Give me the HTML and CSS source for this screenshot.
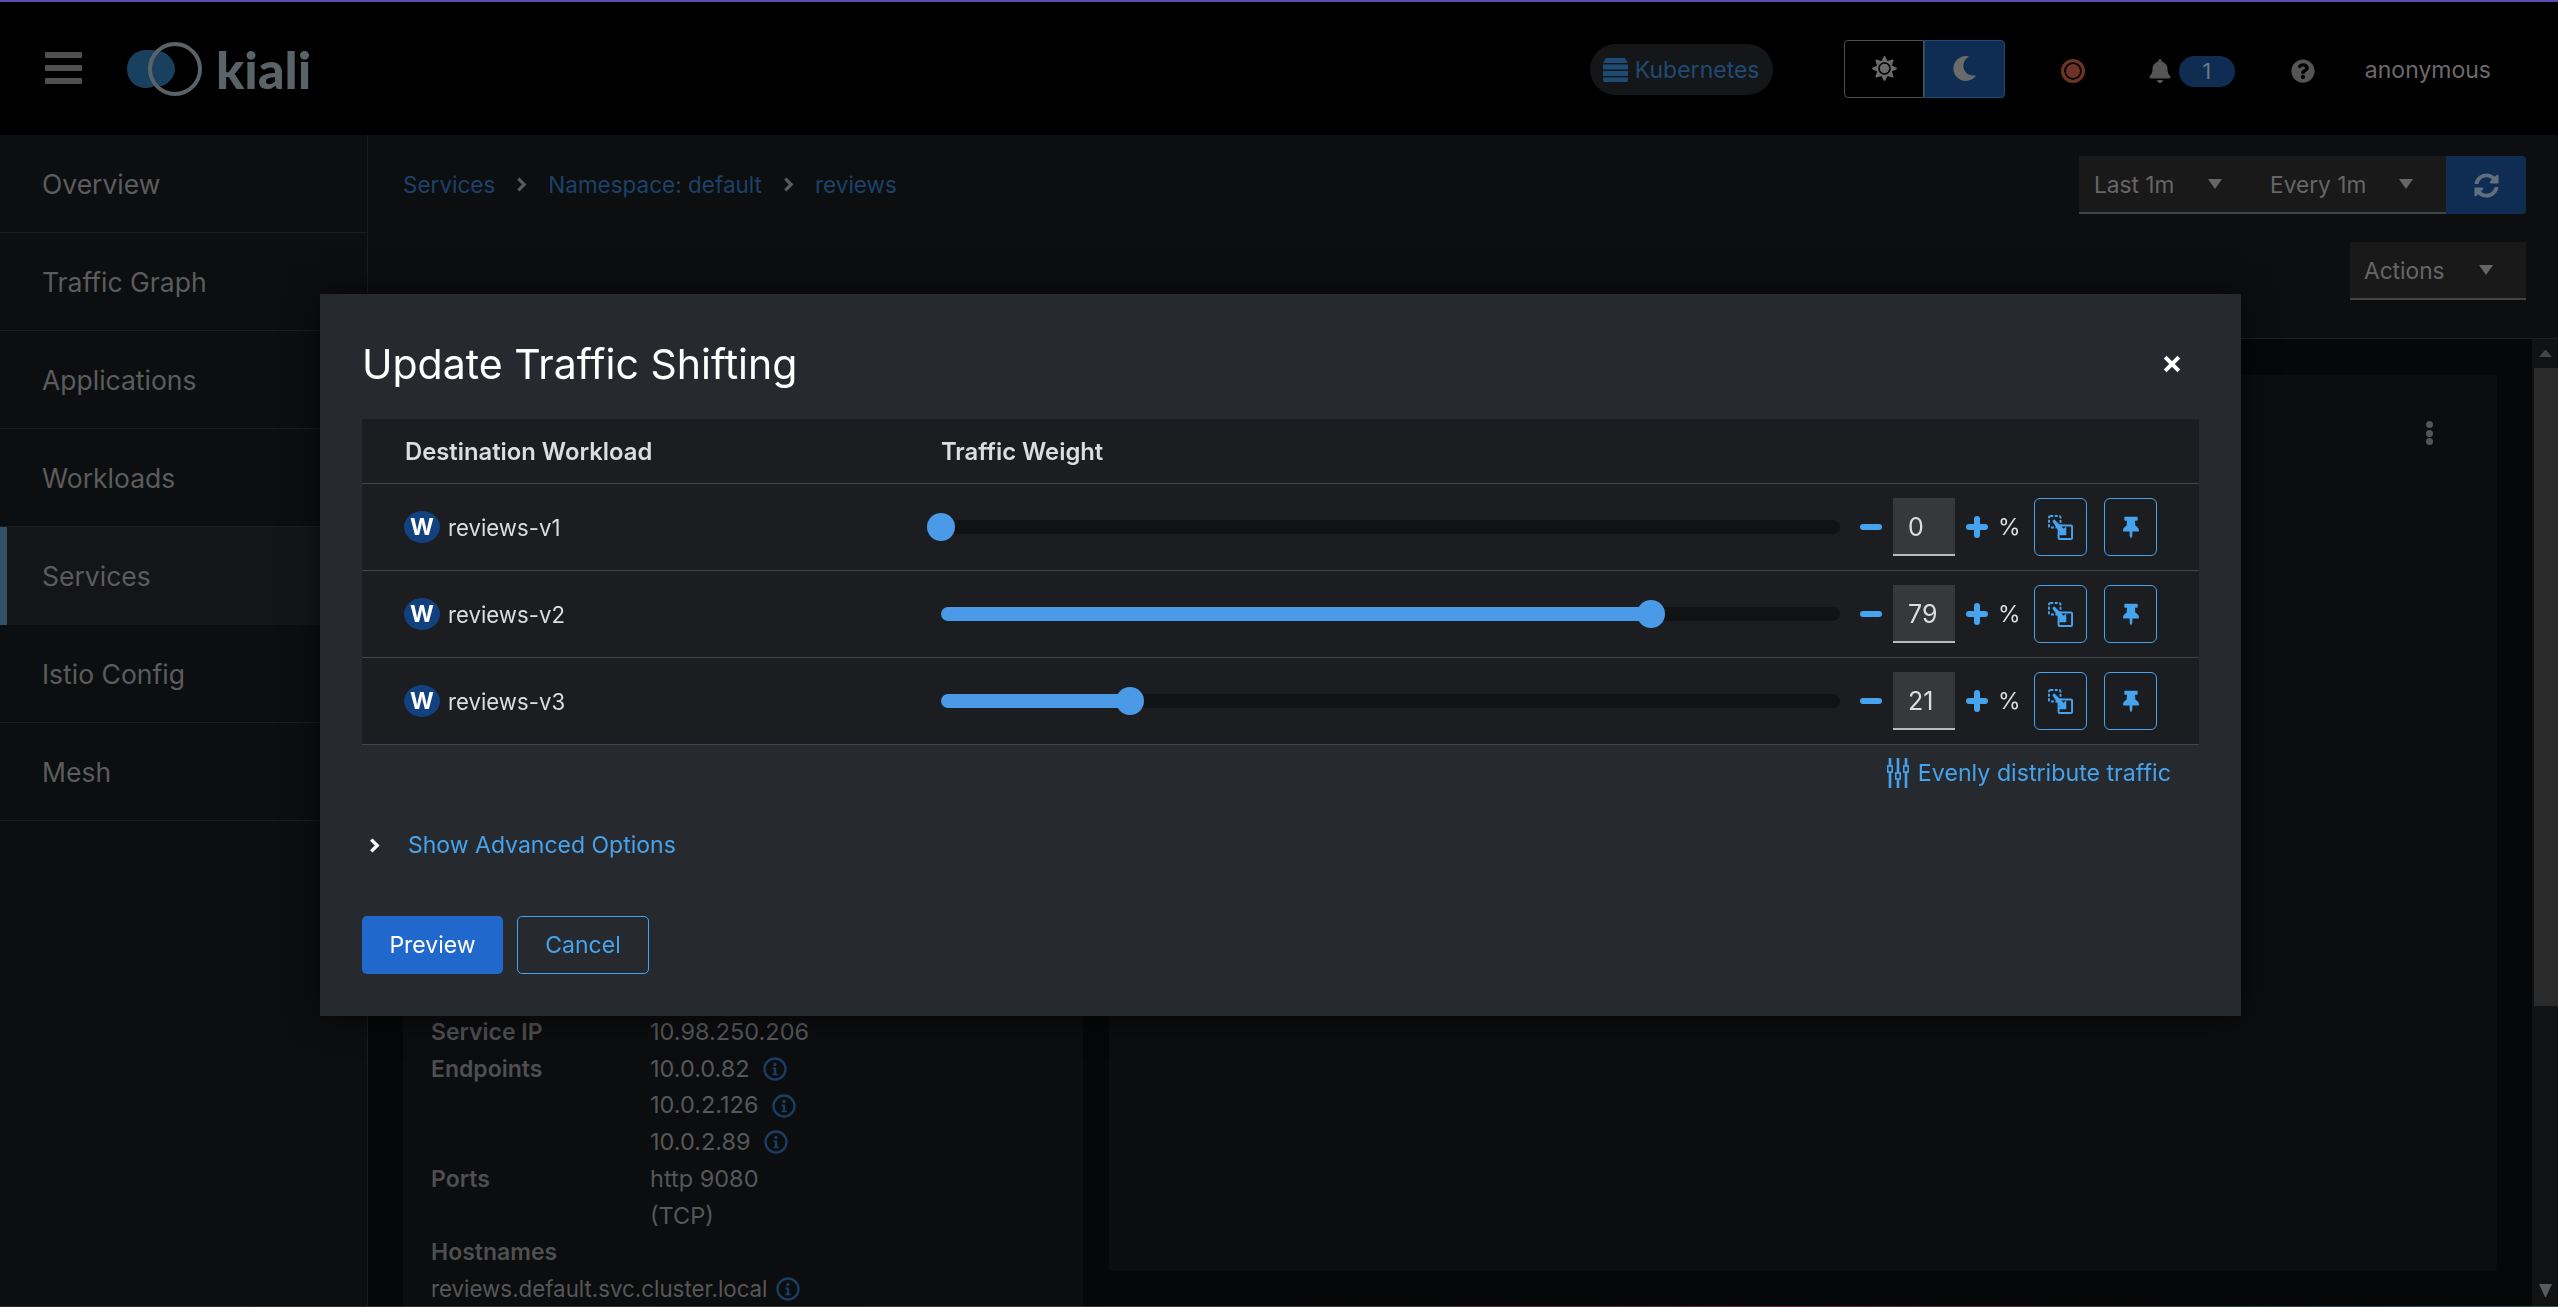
FILE: index.html
```html
<!DOCTYPE html>
<html lang="en">
<head>
  <meta charset="UTF-8">
  <title>Kiali - Update Traffic Shifting</title>
  <link rel="stylesheet" href="styles.css">
</head>
<body>
  <svg class="sprite" aria-hidden="true">
    <symbol id="i-caret" viewBox="0 0 14 10"><path d="M0 0h14L7 10z"/></symbol>
    <symbol id="i-server" viewBox="0 0 25 24"><path d="M3 0h19l3 5H0zM0 6.500h25v5H0zM0 13h25v5H0zM0 19.500h25V22a2 2 0 0 1-2 2H2a2 2 0 0 1-2-2z"/></symbol>
    <symbol id="i-sun" viewBox="0 0 512 512"><path d="M256 160c-52.900 0-96 43.100-96 96s43.100 96 96 96 96-43.100 96-96-43.100-96-96-96zm246.400 80.500l-94.700-47.300 33.500-100.400c4.500-13.600-8.400-26.500-21.900-21.900l-100.400 33.500-47.400-94.800c-6.400-12.800-24.600-12.800-31 0l-47.300 94.700L92.700 70.800c-13.600-4.500-26.500 8.400-21.900 21.900l33.500 100.400-94.700 47.400c-12.800 6.400-12.800 24.600 0 31l94.700 47.300-33.500 100.500c-4.500 13.600 8.400 26.500 21.900 21.900l100.400-33.500 47.300 94.700c6.400 12.800 24.600 12.800 31 0l47.300-94.700 100.400 33.500c13.600 4.500 26.500-8.400 21.900-21.900l-33.500-100.400 94.700-47.300c13-6.500 13-24.700.2-31.100zm-155.900 106c-49.900 49.900-131.100 49.900-181 0-49.900-49.900-49.900-131.100 0-181 49.900-49.900 131.100-49.900 181 0 49.900 49.900 49.900 131.100 0 181z"/></symbol>
    <symbol id="i-moon" viewBox="0 0 512 512"><path d="M283.211 512c78.962 0 151.079-35.925 198.857-94.792 7.068-8.708-.639-21.430-11.562-19.350-124.203 23.654-238.262-71.576-238.262-196.954 0-72.222 38.662-138.635 101.498-174.394 9.686-5.512 7.250-20.197-3.756-22.230A258.156 258.156 0 0 0 283.211 0c-141.309 0-256 114.511-256 256 0 141.309 114.511 256 256 256z"/></symbol>
    <symbol id="i-bell" viewBox="0 0 448 512"><path d="M224 512c35.320 0 63.970-28.650 63.970-64H160.030c0 35.350 28.650 64 63.970 64zm215.390-149.710c-19.320-20.760-55.470-51.990-55.470-154.290 0-77.700-54.480-139.900-127.940-155.160V32c0-17.670-14.320-32-31.980-32s-31.980 14.330-31.980 32v20.840C118.560 68.100 64.080 130.300 64.080 208c0 102.300-36.150 133.530-55.470 154.290-6 6.450-8.660 14.160-8.610 21.710.11 16.400 12.980 32 32.100 32h383.800c19.120 0 32-15.600 32.100-32 .05-7.550-2.610-15.270-8.610-21.710z"/></symbol>
    <symbol id="i-question" viewBox="0 0 512 512"><path d="M504 256c0 136.997-111.043 248-248 248S8 392.997 8 256C8 119.083 119.043 8 256 8s248 111.083 248 248zM262.655 90c-54.497 0-89.255 22.957-116.549 63.758-3.536 5.286-2.353 12.415 2.715 16.258l34.699 26.310c5.205 3.947 12.621 3.008 16.665-2.122 17.864-22.658 30.113-35.797 57.303-35.797 20.429 0 45.698 13.148 45.698 32.958 0 14.976-12.363 22.667-32.534 33.976C247.128 238.528 216 254.941 216 296v4c0 6.627 5.373 12 12 12h56c6.627 0 12-5.373 12-12v-1.333c0-28.462 83.186-29.647 83.186-106.667 0-58.002-60.165-102-116.531-102zM256 338c-25.365 0-46 20.635-46 46 0 25.364 20.635 46 46 46s46-20.636 46-46c0-25.365-20.635-46-46-46z"/></symbol>
    <symbol id="i-sync" viewBox="0 0 512 512"><path d="M370.720 133.280C339.458 104.008 298.888 87.962 255.848 88c-77.458.068-144.328 53.178-162.791 126.850-1.344 5.363-6.122 9.150-11.651 9.150H24.103c-7.498 0-13.194-6.807-11.807-14.176C33.933 94.924 134.813 8 256 8c66.448 0 126.791 26.136 171.315 68.685L463.030 40.970C478.149 25.851 504 36.559 504 57.941V192c0 13.255-10.745 24-24 24H345.941c-21.382 0-32.090-25.851-16.971-40.971l41.750-41.749zM32 296h134.059c21.382 0 32.090 25.851 16.971 40.971l-41.750 41.750c31.262 29.273 71.835 45.319 114.876 45.280 77.418-.07 144.315-53.144 162.787-126.849 1.344-5.363 6.122-9.150 11.651-9.150h57.304c7.498 0 13.194 6.807 11.807 14.176C478.067 417.076 377.187 504 256 504c-66.448 0-126.791-26.136-171.315-68.685L48.970 471.030C33.851 486.149 8 475.441 8 454.059V320c0-13.255 10.745-24 24-24z"/></symbol>
    <symbol id="i-pin" viewBox="0 0 384 512"><path d="M298.028 214.267L285.793 96H328c13.255 0 24-10.745 24-24V24c0-13.255-10.745-24-24-24H56C42.745 0 32 10.745 32 24v48c0 13.255 10.745 24 24 24h42.207L85.972 214.267C37.465 236.820 0 277.261 0 328c0 13.255 10.745 24 24 24h136v104.007c0 1.242.289 2.467.845 3.578l24 48c2.941 5.882 11.364 5.893 14.311 0l24-48a8.008 8.008 0 0 0 .845-3.578V352h136c13.255 0 24-10.745 24-24-.001-51.183-37.983-91.420-85.973-113.733z"/></symbol>
    <symbol id="i-migrate" viewBox="0 0 26 26">
      <rect x="1" y="1" width="12" height="12" rx="1.500" fill="none" stroke="currentColor" stroke-width="2" stroke-dasharray="3 1.600"/>
      <rect x="11" y="11" width="14" height="14" rx="1" fill="none" stroke="currentColor" stroke-width="2"/>
      <path d="M4.500 6.500l2-2 9.800 9.800 2.700-2.700V21h-9.400l2.700-2.700z" fill="currentColor"/>
    </symbol>
    <symbol id="i-sliders" viewBox="0 0 22 30">
      <path d="M3 0v30M11 0v30M19 0v30" fill="none" stroke="currentColor" stroke-width="2.600"/>
      <rect x="0.800" y="8" width="4.400" height="6" fill="#26292d" stroke="currentColor" stroke-width="1.600"/>
      <rect x="8.800" y="15" width="4.400" height="6" fill="#26292d" stroke="currentColor" stroke-width="1.600"/>
      <rect x="16.800" y="8" width="4.400" height="6" fill="#26292d" stroke="currentColor" stroke-width="1.600"/>
    </symbol>
    <symbol id="i-info" viewBox="0 0 24 24">
      <circle cx="12" cy="12" r="10.500" fill="none" stroke="currentColor" stroke-width="2.400"/>
      <circle cx="12" cy="7.500" r="1.700" fill="currentColor"/>
      <path d="M9.500 10.500h3.700v6h1.500v1.800H9.500v-1.800h1.400v-4.200H9.500z" fill="currentColor"/>
    </symbol>
  </svg>

  <header class="masthead">
    <div class="burger"><span></span><span></span><span></span></div>
    <div class="logo">
      <svg class="logo-mark" viewBox="0 0 84 58">
        <path d="M19 10C8 10 0 18 0 29s8 19 19 19c4 0 7-1 10-3 4 2 7 1 10-1 6-4 9-10 9-15 0-6-4-12-10-16-6-3-12-3-19-3z" fill="#1a4060"/>
        <circle cx="48" cy="29" r="25" fill="none" stroke="#5a6468" stroke-width="4"/>
      </svg>
      <span class="logo-word">kiali</span>
    </div>
    <div class="masthead-tools">
      <div class="cluster-pill">
        <svg class="icon-server"><use href="#i-server"/></svg>
        <span>Kubernetes</span>
      </div>
      <div class="theme-toggle">
        <div class="theme-light"><svg class="icon-theme"><use href="#i-sun"/></svg></div>
        <div class="theme-dark"><svg class="icon-theme"><use href="#i-moon"/></svg></div>
      </div>
      <div class="record-dot"></div>
      <div class="notify">
        <svg class="icon-bell"><use href="#i-bell"/></svg>
        <span class="notify-count">1</span>
      </div>
      <svg class="icon-help"><use href="#i-question"/></svg>
      <span class="username">anonymous</span>
    </div>
  </header>

  <div class="page-body">
    <nav class="sidebar">
      <a class="nav-item">Overview</a>
      <a class="nav-item">Traffic Graph</a>
      <a class="nav-item">Applications</a>
      <a class="nav-item">Workloads</a>
      <a class="nav-item active">Services</a>
      <a class="nav-item">Istio Config</a>
      <a class="nav-item">Mesh</a>
    </nav>

    <main class="main">
      <div class="toolbar">
        <div class="breadcrumb">
          <a>Services</a>
          <svg class="crumb-sep" viewBox="0 0 10 14"><path d="M2 1.500L7.500 7 2 12.500" fill="none" stroke="currentColor" stroke-width="3"/></svg>
          <a>Namespace: default</a>
          <svg class="crumb-sep" viewBox="0 0 10 14"><path d="M2 1.500L7.500 7 2 12.500" fill="none" stroke="currentColor" stroke-width="3"/></svg>
          <a>reviews</a>
        </div>
        <div class="time-controls">
          <div class="time-group">
            <div class="select select-last">Last 1m<svg class="caret"><use href="#i-caret"/></svg></div>
            <div class="select select-every">Every 1m<svg class="caret"><use href="#i-caret"/></svg></div>
          </div>
          <button class="refresh"><svg class="icon-sync"><use href="#i-sync"/></svg></button>
        </div>
      </div>
      <div class="actions-row">
        <div class="select select-actions">Actions<svg class="caret"><use href="#i-caret"/></svg></div>
      </div>

      <div class="content">
        <div class="scroller">
          <section class="card card-info">
            <dl class="props">
              <dt>Service IP</dt><dd>10.98.250.206</dd>
              <dt>Endpoints</dt><dd>10.0.0.82<svg class="icon-info"><use href="#i-info"/></svg></dd>
              <dt></dt><dd>10.0.2.126<svg class="icon-info"><use href="#i-info"/></svg></dd>
              <dt></dt><dd>10.0.2.89<svg class="icon-info"><use href="#i-info"/></svg></dd>
              <dt>Ports</dt><dd>http 9080</dd>
              <dt></dt><dd>(TCP)</dd>
            </dl>
            <div class="prop-title">Hostnames</div>
            <div class="prop-line">reviews.default.svc.cluster.local<svg class="icon-info"><use href="#i-info"/></svg></div>
          </section>
          <section class="card card-graph">
            <div class="kebab"><span></span><span></span><span></span></div>
          </section>
        </div>
        <div class="scrollbar">
          <div class="scroll-up"></div>
          <div class="scroll-thumb"></div>
          <div class="scroll-track"></div>
          <div class="scroll-down"></div>
        </div>
      </div>
    </main>
  </div>
  <div class="status-line"></div>

  <div class="backdrop">
    <div class="modal">
      <div class="modal-head">
        <h1>Update Traffic Shifting</h1>
        <svg class="modal-close" viewBox="0 0 16 16"><path d="M2.500 2.500l11 11M13.500 2.500l-11 11" fill="none" stroke="currentColor" stroke-width="3.200"/></svg>
      </div>

      <div class="weights">
        <div class="weights-head">
          <span>Destination Workload</span>
          <span>Traffic Weight</span>
        </div>

        <div class="weight-row">
          <div class="workload"><span class="badge">W</span>reviews-v1</div>
          <div class="slider-cell">
            <div class="slider">
              <div class="slider-fill" style="width: 0%"></div>
              <div class="slider-thumb" style="left: 0%"></div>
            </div>
            <span class="step step-minus"></span>
            <div class="weight-input">0</div>
            <span class="step step-plus"></span>
            <span class="percent">%</span>
            <button class="icon-btn"><svg class="icon-migrate"><use href="#i-migrate"/></svg></button>
            <button class="icon-btn"><svg class="icon-pin"><use href="#i-pin"/></svg></button>
          </div>
        </div>

        <div class="weight-row">
          <div class="workload"><span class="badge">W</span>reviews-v2</div>
          <div class="slider-cell">
            <div class="slider">
              <div class="slider-fill" style="width: 79%"></div>
              <div class="slider-thumb" style="left: 79%"></div>
            </div>
            <span class="step step-minus"></span>
            <div class="weight-input">79</div>
            <span class="step step-plus"></span>
            <span class="percent">%</span>
            <button class="icon-btn"><svg class="icon-migrate"><use href="#i-migrate"/></svg></button>
            <button class="icon-btn"><svg class="icon-pin"><use href="#i-pin"/></svg></button>
          </div>
        </div>

        <div class="weight-row">
          <div class="workload"><span class="badge">W</span>reviews-v3</div>
          <div class="slider-cell">
            <div class="slider">
              <div class="slider-fill" style="width: 21%"></div>
              <div class="slider-thumb" style="left: 21%"></div>
            </div>
            <span class="step step-minus"></span>
            <div class="weight-input">21</div>
            <span class="step step-plus"></span>
            <span class="percent">%</span>
            <button class="icon-btn"><svg class="icon-migrate"><use href="#i-migrate"/></svg></button>
            <button class="icon-btn"><svg class="icon-pin"><use href="#i-pin"/></svg></button>
          </div>
        </div>
      </div>

      <div class="even-row">
        <a class="link even-link"><svg class="icon-sliders"><use href="#i-sliders"/></svg>Evenly distribute traffic</a>
      </div>

      <div class="advanced">
        <svg class="advanced-arrow" viewBox="0 0 10 14"><path d="M2 1.500L7.500 7 2 12.500" fill="none" stroke="currentColor" stroke-width="3.200"/></svg>
        <a class="link">Show Advanced Options</a>
      </div>

      <div class="modal-foot">
        <button class="btn btn-primary">Preview</button>
        <button class="btn btn-secondary">Cancel</button>
      </div>
    </div>
  </div>
</body>
</html>
```

FILE: styles.css
```css
* {
  box-sizing: border-box;
}

html, body {
  margin: 0;
  height: 1307px;
  overflow: hidden;
}

body {
  display: flex;
  flex-direction: column;
  background: #0d0e10;
  font-family: 'Inter', 'Open Sans', sans-serif;
  font-size: 23px;
  color: #5c5c5c;
}

.sprite {
  display: none;
}

/* top bar */

.masthead {
  height: 135px;
  flex: none;
  display: flex;
  align-items: center;
  background: #000;
  border-top: 2px solid #5c4db1;
  padding-left: 45px;
}

.burger {
  width: 37px;
  display: flex;
  flex-direction: column;
  gap: 7px;
  margin-top: -1px;
}

.burger span {
  height: 6px;
  border-radius: 1px;
  background: #505050;
}

.logo {
  display: flex;
  align-items: center;
  margin-left: 45px;
}

.logo-mark {
  width: 84px;
  height: 58px;
}

.logo-word {
  margin-left: 5px;
  font-family: 'Lato', sans-serif;
  font-size: 52px;
  font-weight: 900;
  line-height: 1;
  color: #5a6468;
}

.masthead-tools {
  margin-left: auto;
  display: flex;
  align-items: center;
  padding: 5px 67px 0 0;
}

.cluster-pill {
  width: 183px;
  height: 51px;
  display: flex;
  align-items: center;
  gap: 7px;
  padding-left: 13px;
  border-radius: 26px;
  background: #151617;
  color: #1f4a75;
  margin: -3px 71px 0 0;
}

.icon-server {
  width: 25px;
  height: 24px;
  fill: currentColor;
}

.theme-toggle {
  display: flex;
  width: 161px;
  height: 58px;
  margin: -5px 56px 0 0;
}

.theme-light, .theme-dark {
  flex: 1;
  display: flex;
  align-items: center;
  justify-content: center;
  color: #6a6a6a;
}

.theme-light {
  border: 1px solid #4f4f4f;
  border-radius: 4px 0 0 4px;
}

.theme-dark {
  background: #0f2d52;
  border: 1px solid #1f4a75;
  border-radius: 0 4px 4px 0;
}

.icon-theme {
  width: 25px;
  height: 25px;
  fill: currentColor;
}

.record-dot {
  width: 24px;
  height: 24px;
  border-radius: 50%;
  border: 3px solid #6e3226;
  background: #6e3226;
  box-shadow: inset 0 0 0 2px #000;
  margin-right: 64px;
}

.notify {
  display: flex;
  align-items: center;
  gap: 8px;
  margin-right: 56px;
}

.icon-bell {
  width: 22px;
  height: 24px;
  fill: #555;
}

.notify-count {
  width: 56px;
  height: 31px;
  border-radius: 16px;
  background: #0f2d52;
  color: #6b7a8a;
  font-size: 21px;
  line-height: 31px;
  text-align: center;
}

.icon-help {
  width: 24px;
  height: 24px;
  fill: #555;
  margin-right: 50px;
}

.username {
  margin-top: -3px;
  color: #6a6a6a;
}

/* page under the top bar */

.page-body {
  flex: 1;
  min-height: 0;
  display: flex;
}

.status-line {
  height: 1px;
  flex: none;
  background: linear-gradient(to right, #2a2a2a, #3a3a3a 50%, #5c3030 70%, #3a3a3a 85%, #2c5050);
}

.sidebar {
  width: 368px;
  flex: none;
  border-right: 1px solid #1b1c1e;
  font-size: 26.500px;
}

.nav-item {
  display: flex;
  align-items: center;
  height: 98px;
  padding-left: 42px;
  border-bottom: 1px solid #1b1c1e;
  color: #5c5c5c;
}

.nav-item.active {
  padding-left: 35px;
  background: #141517;
  border-left: 7px solid #34506b;
  border-bottom: none;
}

.main {
  flex: 1;
  min-width: 0;
  display: flex;
  flex-direction: column;
}

.toolbar {
  display: flex;
  align-items: flex-start;
  justify-content: space-between;
  padding: 21px 32px 0 35px;
}

.breadcrumb {
  display: flex;
  align-items: center;
  height: 58px;
  margin-top: -1px;
  font-size: 22.500px;
  color: #1c4269;
}

.crumb-sep {
  width: 11px;
  height: 15px;
  margin: 0 21px;
  color: #5a5a5a;
}

.time-controls {
  display: flex;
}

.time-group {
  display: flex;
  width: 367px;
  height: 58px;
  background: #19191a;
  border-bottom: 2px solid #444;
}

.select {
  position: relative;
  display: flex;
  align-items: center;
  font-size: 22.700px;
  color: #666;
}

.select-last {
  width: 176px;
  padding-left: 15px;
}

.select-every {
  flex: 1;
  padding-left: 15px;
}

.caret {
  width: 14px;
  height: 10px;
  fill: #666;
  margin-left: auto;
  margin-right: 33px;
}

.refresh {
  width: 80px;
  height: 58px;
  border: none;
  border-radius: 0 4px 4px 0;
  background: #0f2d52;
  display: flex;
  align-items: center;
  justify-content: center;
  padding: 0;
}

.icon-sync {
  width: 25px;
  height: 25px;
  fill: #5f6f80;
}

.actions-row {
  display: flex;
  justify-content: flex-end;
  padding: 28px 32px 0 0;
}

.select-actions {
  width: 176px;
  height: 58px;
  padding-left: 14px;
  background: #19191a;
  border-bottom: 2px solid #444;
}

.content {
  flex: 1;
  min-height: 0;
  margin-top: 38px;
  display: flex;
  border-top: 1px solid #1e1f20;
  background: #060708;
}

.scroller {
  flex: 1;
  min-width: 0;
  display: flex;
  gap: 26px;
  padding: 36px 35px 0;
  overflow: hidden;
}

.card {
  background: #0c0d0f;
}

.card-info {
  width: 680px;
  flex: none;
  padding: 639px 0 0 28px;
  color: #575757;
  line-height: 36.700px;
}

.props {
  margin: 0;
  display: grid;
  grid-template-columns: 219px 1fr;
}

.props dt {
  font-weight: 600;
  color: #4f4f4f;
}

.props dd {
  margin: 0;
  display: flex;
  align-items: center;
  gap: 13px;
  font-size: 23.500px;
}

.prop-title {
  font-weight: 600;
  color: #4f4f4f;
}

.prop-line {
  display: flex;
  align-items: center;
  gap: 8px;
  font-size: 22.300px;
}

.icon-info {
  width: 24px;
  height: 24px;
  color: #1a3d63;
}

.card-graph {
  flex: 1;
  align-self: flex-start;
  height: 896px;
  display: flex;
  justify-content: flex-end;
  padding: 46px 64px 0 0;
}

.kebab {
  display: flex;
  flex-direction: column;
  gap: 1.500px;
}

.kebab span {
  width: 7px;
  height: 7px;
  border-radius: 50%;
  background: #555;
}

.scrollbar {
  width: 26px;
  flex: none;
  display: flex;
  flex-direction: column;
  background: #111213;
}

.scroll-up {
  border-style: solid;
  border-width: 0 6.500px 7px;
  border-color: transparent transparent #454545;
  width: 13px;
  height: 7px;
  margin: 11px auto 0;
  flex: none;
}

.scroll-thumb {
  height: 638px;
  margin: 11px 0 0 2px;
  background: #2a2a2a;
  flex: none;
}

.scroll-track {
  flex: 1;
}

.scroll-down {
  border-style: solid;
  border-width: 13px 6.500px 0;
  border-color: #5a5a5a transparent transparent;
  width: 13px;
  margin: 0 auto 9px;
  flex: none;
}

/* dialog */

.backdrop {
  position: fixed;
  inset: 0;
  padding: 294px 317px 0 320px;
}

.modal {
  height: 722px;
  background: #26292d;
  padding: 45px 42px 0;
  box-shadow: 0 0 30px rgba(0, 0, 0, 0.6);
  color: #ddd;
}

.modal-head {
  height: 50px;
  display: flex;
  align-items: center;
  justify-content: space-between;
  margin-bottom: 30px;
}

.modal-head h1 {
  margin: 0;
  font-size: 41px;
  font-weight: 400;
  color: #fff;
}

.modal-close {
  width: 20px;
  height: 20px;
  margin-right: 17px;
  color: #fff;
}

.weights {
  background: #1b1d21;
}

.weights-head {
  height: 65px;
  display: grid;
  grid-template-columns: 536px 1fr;
  align-items: center;
  padding-left: 43px;
  border-bottom: 1px solid #444548;
  font-size: 23.800px;
  font-weight: 600;
  color: #ddd;
}

.weight-row {
  height: 87px;
  display: grid;
  grid-template-columns: 537px 1fr;
  align-items: center;
  padding: 0 42px;
  border-bottom: 1px solid #444548;
}

.workload {
  display: flex;
  align-items: center;
  gap: 8px;
  font-size: 22.200px;
}

.badge {
  width: 36px;
  height: 32px;
  border-radius: 50%;
  background: #12417f;
  color: #fff;
  font-weight: 700;
  font-size: 23px;
  line-height: 32px;
  text-align: center;
}

.slider-cell {
  display: flex;
  align-items: center;
}

.slider {
  position: relative;
  flex: 1;
  height: 14px;
  margin-right: 20px;
  border-radius: 7px;
  background: #111214;
}

.slider-fill {
  height: 100%;
  border-radius: 7px;
  background: #4a9ae8;
}

.slider-thumb {
  position: absolute;
  top: -7px;
  width: 28px;
  height: 28px;
  margin-left: -14px;
  border-radius: 50%;
  background: #4a9ae8;
}

.step {
  position: relative;
  width: 22px;
  height: 6px;
  border-radius: 3px;
  background: #46a3ee;
}

.step-plus::after {
  content: "";
  position: absolute;
  left: 8px;
  top: -8px;
  width: 6px;
  height: 22px;
  border-radius: 3px;
  background: #46a3ee;
}

.weight-input {
  width: 62px;
  height: 58px;
  margin: 0 11px;
  padding-left: 15px;
  line-height: 58px;
  font-size: 25px;
  background: #37383c;
  border-bottom: 2px solid #bbb;
  color: #ddd;
}

.percent {
  margin: 0 16px 0 10px;
  width: 20px;
  font-size: 23px;
}

.icon-btn {
  width: 53px;
  height: 58px;
  padding: 0;
  background: none;
  border: 1.500px solid #46a3ee;
  border-radius: 6px;
  color: #46a3ee;
  display: flex;
  align-items: center;
  justify-content: center;
}

.icon-btn + .icon-btn {
  margin-left: 17px;
}

.icon-migrate {
  width: 25px;
  height: 25px;
}

.icon-pin {
  width: 16px;
  height: 25px;
  fill: currentColor;
}

.link {
  color: #46a3ee;
}

.even-row {
  display: flex;
  justify-content: flex-end;
  padding: 10px 28px 0 0;
}

.even-link {
  display: flex;
  align-items: center;
  gap: 9px;
  line-height: 36px;
  font-size: 23.200px;
}

.icon-sliders {
  width: 22px;
  height: 30px;
}

.advanced {
  display: flex;
  align-items: center;
  margin-top: 36px;
  padding-left: 7px;
  line-height: 36px;
}

.advanced-arrow {
  width: 11px;
  height: 15px;
  margin-right: 28px;
  color: #fff;
}

.modal-foot {
  display: flex;
  gap: 14px;
  margin-top: 53px;
}

.btn {
  height: 58px;
  padding: 0;
  border-radius: 5px;
  font: inherit;
}

.btn-primary {
  width: 141px;
  border: none;
  background: #2168cc;
  color: #fff;
}

.btn-secondary {
  width: 132px;
  background: none;
  border: 1.500px solid #46a3ee;
  color: #46a3ee;
}
```
